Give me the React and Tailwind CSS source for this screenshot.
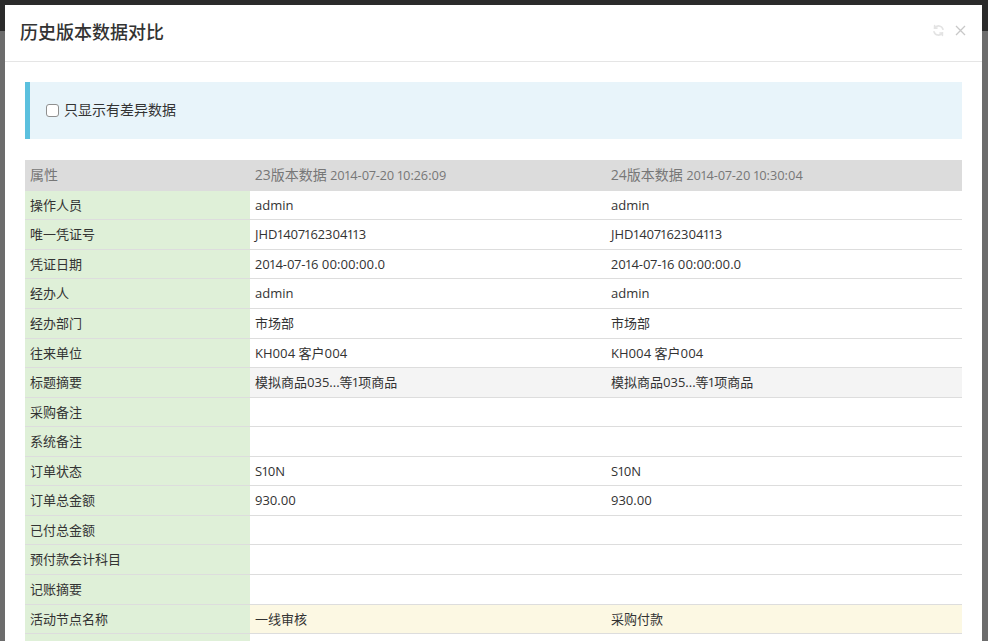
import React from "react";

const rows = [
  ["操作人员", "admin", "admin"],
  ["唯一凭证号", "JHD1407162304113", "JHD1407162304113"],
  ["凭证日期", "2014-07-16 00:00:00.0", "2014-07-16 00:00:00.0"],
  ["经办人", "admin", "admin"],
  ["经办部门", "市场部", "市场部"],
  ["往来单位", "KH004 客户004", "KH004 客户004"],
  ["标题摘要", "模拟商品035...等1项商品", "模拟商品035...等1项商品", "grey"],
  ["采购备注", "", ""],
  ["系统备注", "", ""],
  ["订单状态", "S10N", "S10N"],
  ["订单总金额", "930.00", "930.00"],
  ["已付总金额", "", ""],
  ["预付款会计科目", "", ""],
  ["记账摘要", "", ""],
  ["活动节点名称", "一线审核", "采购付款", "warn"],
  ["", "", ""],
];

export default function App() {
  return (
    <div
      className="h-[641px] w-[988px] overflow-hidden bg-[linear-gradient(to_bottom,#2b2b2b_0,#2b2b2b_31px,#6c6c6c_31px)] pt-[5px] pl-[5px] pr-[6px]"
      style={{ fontFamily: '"Open Sans", "Noto Sans CJK SC", sans-serif' }}
    >
      <div className="bg-white h-[700px] w-[977px] text-[#333]">
        <div className="flex items-start justify-between border-b border-[#e5e5e5] px-[15px] pt-[15px] pb-[15px]">
          <h4 className="text-[18px] leading-[1.42857] font-medium">历史版本数据对比</h4>
          <div className="flex items-center gap-[10px] pt-[4px] pr-[1px]">
            <svg width="13" height="13" viewBox="0 0 16 16" fill="none" stroke="#e3e3e3" strokeWidth="2" strokeLinecap="round">
              <path d="M13.5 6.5A5.7 5.7 0 0 0 3.2 5" />
              <path d="M3.2 2v3h3" />
              <path d="M2.5 9.5A5.7 5.7 0 0 0 12.8 11" />
              <path d="M12.8 14v-3h-3" />
            </svg>
            <svg width="11" height="11" viewBox="0 0 11 11" stroke="#c8c8c8" strokeWidth="1.3">
              <path d="M1 1L10 10M10 1L1 10" />
            </svg>
          </div>
        </div>
        <div className="p-[20px]">
          <div className="flex h-[57px] items-center border-l-[5px] border-[#5bc0de] bg-[#e8f4fa] pl-[16px]">
            <label className="flex items-center text-[14px] leading-[20px]">
              <span className="mr-[5px] inline-block h-[13px] w-[13px] rounded-[3px] border border-[#8f8f8f] bg-white"></span>
              只显示有差异数据
            </label>
          </div>
          <table className="mt-[21px] w-full border-collapse text-[13px] leading-[1.42857] proportional-nums">
            <thead>
              <tr className="bg-[#dcdcdc] text-[#777] text-[14px] leading-[20px]">
                <th className="w-[225px] px-[5px] pt-[5px] pb-[6px] text-left font-normal">属性</th>
                <th className="w-[356px] px-[5px] pt-[5px] pb-[6px] text-left font-normal">
                  23版本数据 <span className="text-[12.75px]">2014-07-20 10:26:09</span>
                </th>
                <th className="px-[5px] pt-[5px] pb-[6px] text-left font-normal">
                  24版本数据 <span className="text-[12.75px]">2014-07-20 10:30:04</span>
                </th>
              </tr>
            </thead>
            <tbody>
              {rows.map(([k, a, b, t], i) => {
                const vbg = t === "grey" ? "bg-[#f4f4f4]" : t === "warn" ? "bg-[#fcf8e3]" : "bg-white";
                const bt = i === 0 ? "" : "border-t border-[#dddddd]";
                return (
                  <tr key={i}>
                    <td className={`${bt} bg-[#dff0d8] px-[5px] py-[5px]`}>{k || "\u00a0"}</td>
                    <td className={`${bt} ${vbg} px-[5px] py-[5px]`}>{a || "\u00a0"}</td>
                    <td className={`${bt} ${vbg} px-[5px] py-[5px]`}>{b || "\u00a0"}</td>
                  </tr>
                );
              })}
            </tbody>
          </table>
        </div>
      </div>
    </div>
  );
}
